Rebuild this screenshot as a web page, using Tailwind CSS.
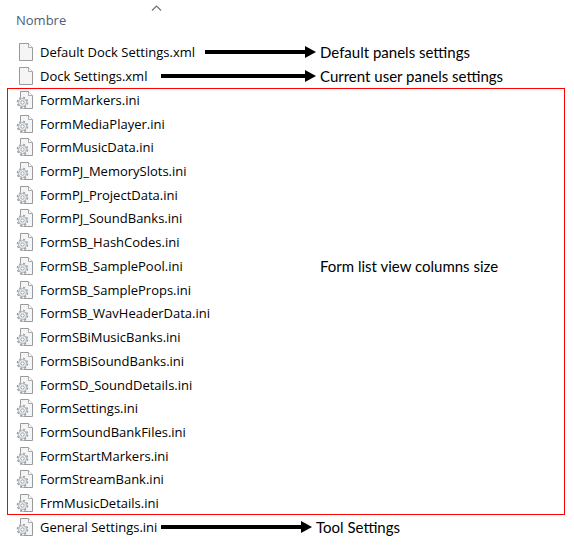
<!DOCTYPE html>
<html lang="es">
<head>
<meta charset="utf-8">
<title>Settings files</title>
<script src="https://cdn.jsdelivr.net/npm/@tailwindcss/browser@4"></script>
</head>
<body class="bg-white font-['Open_Sans',sans-serif] text-[13px] leading-5 text-black">
<svg class="hidden">
  <defs>
    <symbol id="page" viewBox="0 0 18 18">
      <path d="M3.5 .5h9l4 4v13h-13z" fill="#f5f5f5" stroke="#999"/>
      <path d="M12.500 .5v4h4" fill="#fff" stroke="#aaa"/>
    </symbol>
    <symbol id="config" viewBox="0 0 18 18">
      <path d="M4.500 .5h8l4 4v13h-12z" fill="#f5f5f5" stroke="#999"/>
      <path d="M12.500 .5v4h4" fill="#fff" stroke="#aaa"/>
      <circle cx="6.500" cy="11.500" r="6" fill="#f8f8f8"/>
      <circle cx="6.500" cy="11.500" r="5" fill="none" stroke="#929ba2" stroke-width="1.500" stroke-dasharray="2 1.927"/>
      <circle cx="6.500" cy="11.500" r="4" fill="#eff1f2" stroke="#a0a7ad" stroke-width=".9"/>
      <circle cx="6.500" cy="11.500" r="1.700" fill="#fff" stroke="#929ba2" stroke-width=".9"/>
    </symbol>
  </defs>
</svg>
<main class="pr-[9px] pl-[7px]">
  <header class="h-10 pl-[9px]">
    <button class="flex w-40 items-start text-left text-[#4c607a]">
      <span class="flex-1 pt-[10px]">Nombre</span>
      <svg class="mt-[5px] mr-[14px] h-[7px] w-[11px]" viewBox="0 0 11 7" fill="none" stroke="#737373" stroke-width="1.200"><path d="M1 5.500 5.500 1 10 5.500"/></svg>
    </button>
  </header>
  <ul class="grid auto-rows-[24px]">
    <li class="flex items-center pl-[9px]">
      <div class="flex w-[300px] items-center"><svg class="mr-[6px] size-[18px]"><use href="#page"/></svg><span>Default Dock Settings.xml</span><span class="ml-[10px] h-1 flex-1 bg-black"></span><svg class="h-3 w-[11px]" viewBox="0 0 11 12"><path d="M0 0 11 6 0 12z"/></svg></div>
      <span class="pl-1 font-[Lato] text-[15px]">Default panels settings</span>
    </li>
    <li class="flex items-center pl-[9px]">
      <div class="flex w-[300px] items-center"><svg class="mr-[6px] size-[18px]"><use href="#page"/></svg><span>Dock Settings.xml</span><span class="ml-[14px] h-1 flex-1 bg-black"></span><svg class="h-3 w-[11px]" viewBox="0 0 11 12"><path d="M0 0 11 6 0 12z"/></svg></div>
      <span class="pl-1 font-[Lato] text-[15px]">Current user panels settings</span>
    </li>
  </ul>
  <ul id="forms" class="grid min-h-[427px] auto-rows-fr outline outline-[#f00] -outline-offset-1"></ul>
  <div class="flex h-6 items-center pl-[9px]">
    <div class="flex w-[296px] items-center"><svg class="mr-[6px] size-[18px]"><use href="#config"/></svg><span>General Settings.ini</span><span class="ml-1 h-1 flex-1 bg-black"></span><svg class="h-3 w-[11px]" viewBox="0 0 11 12"><path d="M0 0 11 6 0 12z"/></svg></div>
    <span class="pl-1 font-[Lato] text-[15px]">Tool Settings</span>
  </div>
</main>
<script>
const files = ["FormMarkers","FormMediaPlayer","FormMusicData","FormPJ_MemorySlots","FormPJ_ProjectData","FormPJ_SoundBanks","FormSB_HashCodes","FormSB_SamplePool","FormSB_SampleProps","FormSB_WavHeaderData","FormSBiMusicBanks","FormSBiSoundBanks","FormSD_SoundDetails","FormSettings","FormSoundBankFiles","FormStartMarkers","FormStreamBank","FrmMusicDetails"];
const notes = {FormSB_SamplePool: "Form list view columns size"};
document.getElementById("forms").innerHTML = files.map(f => `<li class="flex items-center pl-[9px]"><div class="flex w-[300px] items-center"><svg class="mr-[6px] size-[18px]"><use href="#config"/></svg><span>${f}.ini</span></div>${notes[f] ? `<span class="pl-1 font-[Lato] text-[15px]">${notes[f]}</span>` : ""}</li>`).join("");
</script>
</body>
</html>
